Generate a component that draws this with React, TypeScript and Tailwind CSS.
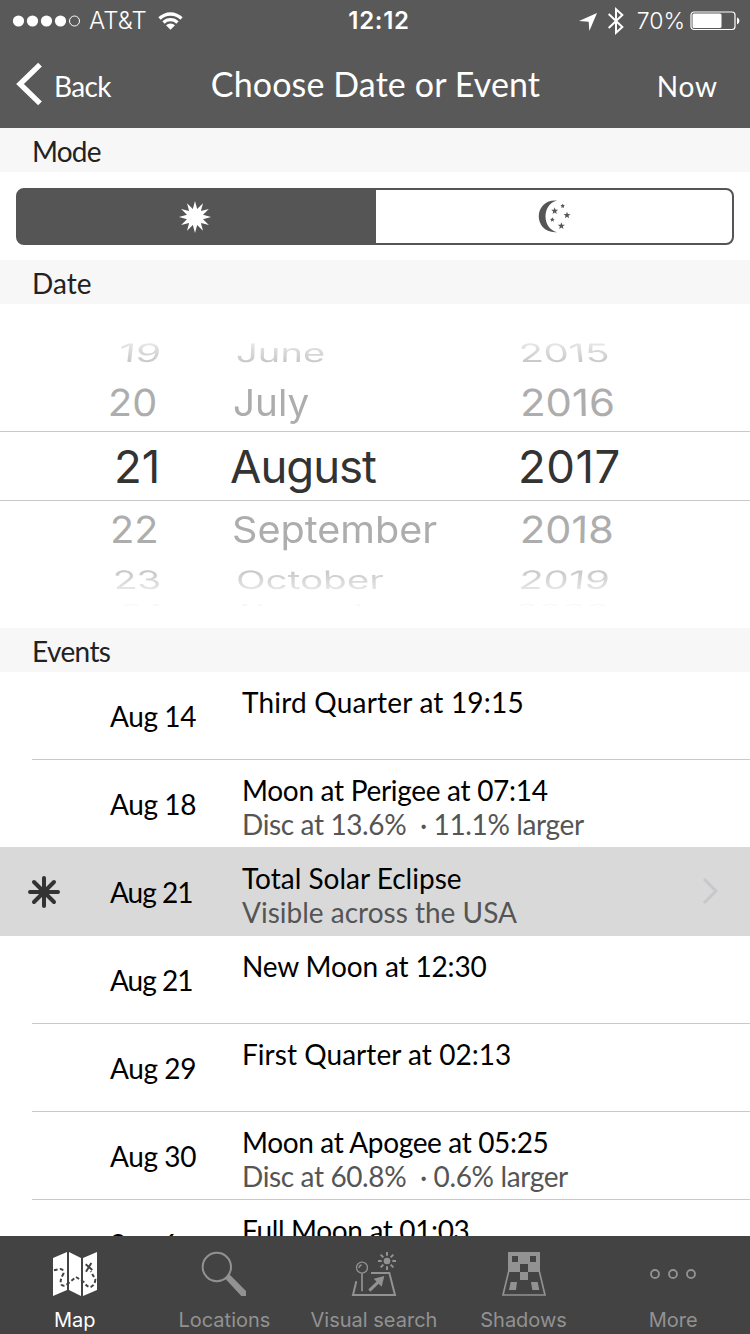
import React from "react";

function starPoints(cx: number, cy: number, outer: number, inner: number, tips: number) {
  return Array.from({ length: tips * 2 }, (_, i) => {
    const r = i % 2 ? inner : outer;
    const a = (Math.PI * i) / tips - Math.PI / 2;
    return `${(cx + r * Math.cos(a)).toFixed(2)},${(cy + r * Math.sin(a)).toFixed(2)}`;
  }).join(" ");
}

function StatusBar() {
  return (
    <div className="grid h-10 grid-cols-[1fr_auto_1fr] items-center pl-3 pr-2.5 font-['Inter',sans-serif] text-[23px] leading-10">
      <div className="flex items-center">
        <svg width="69" height="12" viewBox="0 0 69 12" fill="#fff">
          <circle cx="6.5" cy="6" r="5.6" />
          <circle cx="20.5" cy="6" r="5.6" />
          <circle cx="34.5" cy="6" r="5.6" />
          <circle cx="48.5" cy="6" r="5.6" />
          <circle cx="62.5" cy="6" r="5" fill="none" stroke="#fff" />
        </svg>
        <span className="ml-2 pt-px text-[24px] font-light tracking-[0.1px]">AT&amp;T</span>
        <svg className="ml-[11px]" width="25" height="19" viewBox="0 0 75 57">
          <path
            d="M1 19 A52 52 0 0 1 74 19 L67 26 A42 42 0 0 0 8 26Z M13 31 A35 35 0 0 1 62 31 L55 38 A25 25 0 0 0 20 38Z M24 43 A19 19 0 0 1 51 43 L37.500 56Z"
            fill="#fff"
          />
        </svg>
      </div>
      <span className="pl-1.5 pt-px text-[24px] font-semibold tracking-[0.7px]">12:12</span>
      <div className="flex items-center justify-end">
        <svg className="mt-0.5" width="18" height="18" viewBox="0 0 54 54">
          <path d="M54 0 L31 54 L29 26 L0 24Z" fill="#fff" />
        </svg>
        <svg className="ml-[11px]" width="16" height="28" viewBox="0 0 48 84" fill="none" stroke="#fff" strokeWidth="6">
          <path d="M2 21 L43 60 L24 77 V7 L43 24 L2 63" />
        </svg>
        <span className="ml-[13px] pt-px font-light">70%</span>
        <svg className="ml-[5px]" width="50" height="20" viewBox="0 0 50 20">
          <rect x="1" y="1" width="44" height="17.500" rx="3" fill="none" stroke="#fff" strokeWidth="1.200" />
          <rect x="2.500" y="2.500" width="29" height="14.500" rx="1.500" fill="#fff" />
          <path d="M47 6.500 Q49.500 7.500 49.500 9.800 T47 13.500Z" fill="#fff" />
        </svg>
      </div>
    </div>
  );
}

function NavBar() {
  return (
    <div className="grid h-[88px] grid-cols-[180px_1fr_180px] items-center">
      <div className="flex items-center pl-4">
        <svg width="27" height="44" viewBox="0 0 81 132" fill="none" stroke="#fff" strokeWidth="16">
          <path d="M72 8 L12 66 L72 124" />
        </svg>
        <span className="ml-[11px] mt-1 tracking-[-0.6px]">Back</span>
      </div>
      <h1 className="pb-px pl-px text-center text-[34px] tracking-[0.12px]">Choose Date or Event</h1>
      <span className="pr-8 pt-1 text-right tracking-[0.9px]">Now</span>
    </div>
  );
}

function SectionHeader({ title, tracking = "" }: { title: string; tracking?: string }) {
  return <h2 className={`h-11 bg-[#f7f7f7] pl-8 leading-[46px] text-[#222] ${tracking}`}>{title}</h2>;
}

function ModeSwitch() {
  return (
    <div className="h-[88px] px-4 pt-4">
      <div className="flex h-[57px] overflow-hidden rounded-lg border-2 border-[#555] bg-[linear-gradient(to_right,#555_50%,#fff_50%)]">
        <div className="flex w-[358px] items-center justify-center bg-[#555] pr-1">
          <svg width="32" height="32" viewBox="-48 -48 96 96">
            <polygon points={starPoints(0, 0, 48, 25, 12)} fill="#fff" />
          </svg>
        </div>
        <div className="flex flex-1 items-center justify-center">
          <svg width="33" height="33" viewBox="490 212 99 99" fill="#555">
            <path d="M547 213.500 C474 208 474 314 547 308.500 C501 298 501 224 547 213.500Z" />
            <polygon points={starPoints(564, 230, 7, 3.5, 5)} />
            <polygon points={starPoints(540, 245, 11, 4.5, 5)} />
            <polygon points={starPoints(577, 258, 11, 4.5, 5)} />
            <polygon points={starPoints(533, 271, 7.5, 3.5, 5)} />
            <polygon points={starPoints(560, 290, 11, 4.5, 5)} />
          </svg>
        </div>
      </div>
    </div>
  );
}

type WheelCell = [label: string, shape: string];

const wheel: { row: string; tone: string; cells: WheelCell[] }[] = [
  {
    row: "h-1.5 items-end overflow-hidden",
    tone: "origin-bottom-left scale-y-[.25] text-[#f3f3f3]",
    cells: [
      ["18", "ml-[131px] scale-x-[.7]"],
      ["May", "ml-2 scale-x-[.76]"],
      ["2014", "-ml-1 scale-x-[.84]"],
    ],
  },
  {
    row: "h-[42px] items-center",
    tone: "origin-left scale-y-[.56] bg-linear-to-b from-[#ececec] to-[#c2c2c2] bg-clip-text text-transparent",
    cells: [
      ["19", "ml-[119px] scale-x-[.9] -skew-x-[4deg]"],
      ["June", "ml-[5px] scale-x-[.84] -skew-x-[1deg]"],
      ["2015", "ml-0 scale-x-[.88] skew-x-[4deg]"],
    ],
  },
  {
    row: "h-[59px] items-center pt-[3px]",
    tone: "origin-left scale-y-[.82] text-[#adadad]",
    cells: [
      ["20", "ml-[108px] scale-x-[.87] -skew-x-[1deg]"],
      ["July", "ml-[2px] scale-x-[.85]"],
      ["2016", "ml-px scale-x-[.92] skew-x-[1deg]"],
    ],
  },
  {
    row: "h-[70px] items-center border-y border-[#c8c8c8] pt-0.5",
    tone: "text-[#333]",
    cells: [
      ["21", "ml-[114px]"],
      ["August", "-ml-px tracking-[-1px]"],
      ["2017", "-ml-px tracking-[0.5px]"],
    ],
  },
  {
    row: "h-[55px] items-center pt-0.5",
    tone: "origin-left scale-y-[.82] text-[#adadad]",
    cells: [
      ["22", "ml-[110px] scale-x-[.87] skew-x-[1deg]"],
      ["September", "ml-px scale-x-[.87]"],
      ["2018", "ml-px scale-x-[.91] -skew-x-[1deg]"],
    ],
  },
  {
    row: "h-[46px] items-center pt-px",
    tone: "origin-left scale-y-[.56] bg-linear-to-b from-[#c2c2c2] to-[#ececec] bg-clip-text text-transparent",
    cells: [
      ["23", "ml-[113px] scale-x-[.86] skew-x-[4deg]"],
      ["October", "ml-[5px] scale-x-[.85] skew-x-[1deg]"],
      ["2019", "ml-0 scale-x-[.88] -skew-x-[4deg]"],
    ],
  },
  {
    row: "mt-px h-[3px] items-start overflow-hidden",
    tone: "origin-top-left scale-y-[.25] text-[#f8f8f8]",
    cells: [
      ["24", "ml-[121px] scale-x-[.76]"],
      ["November", "ml-2 scale-x-[.76]"],
      ["2020", "-ml-1 scale-x-[.84]"],
    ],
  },
];

function DatePicker() {
  return (
    <div className="h-[324px] pt-5 font-['Inter',sans-serif] text-[45.5px] leading-[46px]">
      {wheel.map((w) => (
        <div key={w.cells[0][0]} className={`grid grid-cols-[231px_288px_1fr] ${w.row}`}>
          {w.cells.map(([label, shape]) => (
            <span key={label} className={`w-fit ${w.tone} ${shape}`}>
              {label}
            </span>
          ))}
        </div>
      ))}
    </div>
  );
}

type SkyEvent = {
  date: string;
  title: string;
  detail?: string;
  selected?: boolean;
  dateTracking?: string;
  titleTracking?: string;
};

const events: SkyEvent[] = [
  { date: "Aug 14", title: "Third Quarter at 19:15", titleTracking: "tracking-[0.2px]" },
  { date: "Aug 18", title: "Moon at Perigee at 07:14", titleTracking: "tracking-[-0.3px]", detail: "Disc at 13.6%  · 11.1% larger" },
  { date: "Aug 21", title: "Total Solar Eclipse", detail: "Visible across the USA", selected: true, dateTracking: "tracking-[-1px]" },
  { date: "Aug 21", title: "New Moon at 12:30", titleTracking: "tracking-[-0.15px]", dateTracking: "tracking-[-1px]" },
  { date: "Aug 29", title: "First Quarter at 02:13", titleTracking: "tracking-[0.05px]" },
  { date: "Aug 30", title: "Moon at Apogee at 05:25", titleTracking: "tracking-[-0.35px]", detail: "Disc at 60.8%  · 0.6% larger" },
  { date: "Sep 6", title: "Full Moon at 01:03", titleTracking: "tracking-[-0.35px]" },
];

function EventRow({ event }: { event: SkyEvent }) {
  const { date, title, detail, selected, dateTracking = "tracking-[-0.4px]", titleTracking = "" } = event;
  return (
    <div className={selected ? "-mt-px h-[89px] shrink-0 bg-[#d9d9d9] pt-px" : "h-[88px] shrink-0"}>
      <div className={`ml-8 flex h-[88px] ${selected ? "" : "border-b border-[#c8c8c8]"}`}>
        <div className="flex w-[78px] items-center">
          {selected && (
            <svg className="-ml-1" width="32" height="32" viewBox="-16 -16 32 32" stroke="#333" strokeWidth="4" strokeLinecap="round">
              <path d="M0 -14V14 M-14 0H14 M-10 -10L10 10 M-10 10L10 -10" />
            </svg>
          )}
        </div>
        <div className={`w-[132px] leading-[88px] ${dateTracking}`}>{date}</div>
        <div className="flex-1 pt-[13px] leading-[34px]">
          <div className={titleTracking}>{title}</div>
          {detail && (
            <div className={`whitespace-pre text-[#555] ${selected ? "" : "tracking-[-0.37px]"}`}>{detail}</div>
          )}
        </div>
        {selected && (
          <svg className="mr-8 mt-[29px]" width="16" height="28" viewBox="0 0 16 28" fill="none" stroke="#c7c7cc" strokeWidth="3">
            <path d="M2 2 L14 14 L2 26" />
          </svg>
        )}
      </div>
    </div>
  );
}

function MapIcon() {
  return (
    <svg width="46" height="46" viewBox="156 183 138 138">
      <path d="M159 204 L201 186 V300 L159 318Z M207 186 L243 204 V318 L207 300Z M249 204 L291 186 V300 L249 318Z" fill="#fff" />
      <g fill="none" stroke="#434343" strokeWidth="6">
        <path
          d="M162 241 L180 237 Q193 238 190 252 Q178 272 184 284 Q191 292 205 280 L228 261 L250 275 Q262 292 272 291 Q285 285 286 268 L272 244"
          strokeDasharray="11 7"
        />
        <path d="M257 223 L277 240 M274 219 L258 245" />
      </g>
    </svg>
  );
}

function MagnifierIcon() {
  return (
    <svg width="46" height="46" viewBox="606 183 138 138" fill="none" stroke="#929292">
      <circle cx="653.500" cy="231" r="42.500" strokeWidth="6" />
      <path d="M679 266 L691 253 L741 303 V318 H727Z" fill="#929292" stroke="none" />
    </svg>
  );
}

function VisualSearchIcon() {
  return (
    <svg width="46" height="46" viewBox="303 183 138 138" fill="none" stroke="#929292">
      <circle cx="336" cy="233" r="16.500" strokeWidth="4" />
      <path d="M327 234 Q328 226 335 225" strokeWidth="4" />
      <path d="M336 250 V304" strokeWidth="5" />
      <path d="M319 274 L309 315 H435 L418 249 H363" strokeWidth="6" />
      <path d="M358 302 L386 275" strokeWidth="9" />
      <path d="M403 258 L395 290 L371 266Z" fill="#929292" stroke="none" />
      <circle cx="411" cy="213" r="10" fill="#929292" stroke="none" />
      <path
        d="M411 186 V197 M411 229 V240 M384 213 H395 M427 213 H438 M392 194 L400 202 M422 224 L430 232 M392 232 L400 224 M422 202 L430 194"
        strokeWidth="6"
      />
    </svg>
  );
}

function ShadowsIcon() {
  return (
    <svg width="46" height="46" viewBox="3 183 138 138" fill="#929292">
      <path
        fillRule="evenodd"
        d="M24 186 H120 V246 H84 V270 H60 V246 H24Z M36 198 V216 H54 V198Z M90 198 V216 H108 V198Z M60 222 V246 H84 V222Z"
      />
      <path d="M32 276 H51 L48 300 H27Z M93 276 H113 L118 300 H97Z" />
      <path d="M26 244 L9 315 H135 L118 244" fill="none" stroke="#929292" strokeWidth="5" />
    </svg>
  );
}

function MoreIcon() {
  return (
    <svg width="46" height="46" viewBox="450 183 138 138" fill="none" stroke="#929292" strokeWidth="5.500">
      <circle cx="465" cy="252" r="12" />
      <circle cx="519" cy="252" r="12" />
      <circle cx="573" cy="252" r="12" />
    </svg>
  );
}

const tabs = [
  { label: "Map", icon: MapIcon, tone: "text-white" },
  { label: "Locations", icon: MagnifierIcon, tone: "text-[#929292]" },
  { label: "Visual search", icon: VisualSearchIcon, tone: "text-[#929292]" },
  { label: "Shadows", icon: ShadowsIcon, tone: "text-[#929292]" },
  { label: "More", icon: MoreIcon, tone: "text-[#929292]" },
];

function TabBar() {
  return (
    <nav className="flex h-[98px] bg-[#434343] pt-[15px] font-['Inter',sans-serif] text-[20px] leading-6">
      {tabs.map(({ label, icon: Icon, tone }) => (
        <div key={label} className={`flex w-[149.6px] flex-col items-center gap-[11px] ${tone}`}>
          <Icon />
          <span>{label}</span>
        </div>
      ))}
    </nav>
  );
}

export default function App() {
  return (
    <div className="flex h-[1334px] w-[750px] flex-col overflow-hidden bg-white font-['Lato','Liberation_Sans',sans-serif] text-[28px] text-black">
      <header className="h-32 bg-[#595959] text-white">
        <StatusBar />
        <NavBar />
      </header>
      <SectionHeader title="Mode" tracking="tracking-[-0.8px]" />
      <ModeSwitch />
      <SectionHeader title="Date" />
      <DatePicker />
      <SectionHeader title="Events" tracking="tracking-[-0.6px]" />
      <div className="flex h-[564px] flex-col overflow-hidden">
        {events.map((event) => (
          <EventRow key={event.title} event={event} />
        ))}
      </div>
      <TabBar />
    </div>
  );
}
